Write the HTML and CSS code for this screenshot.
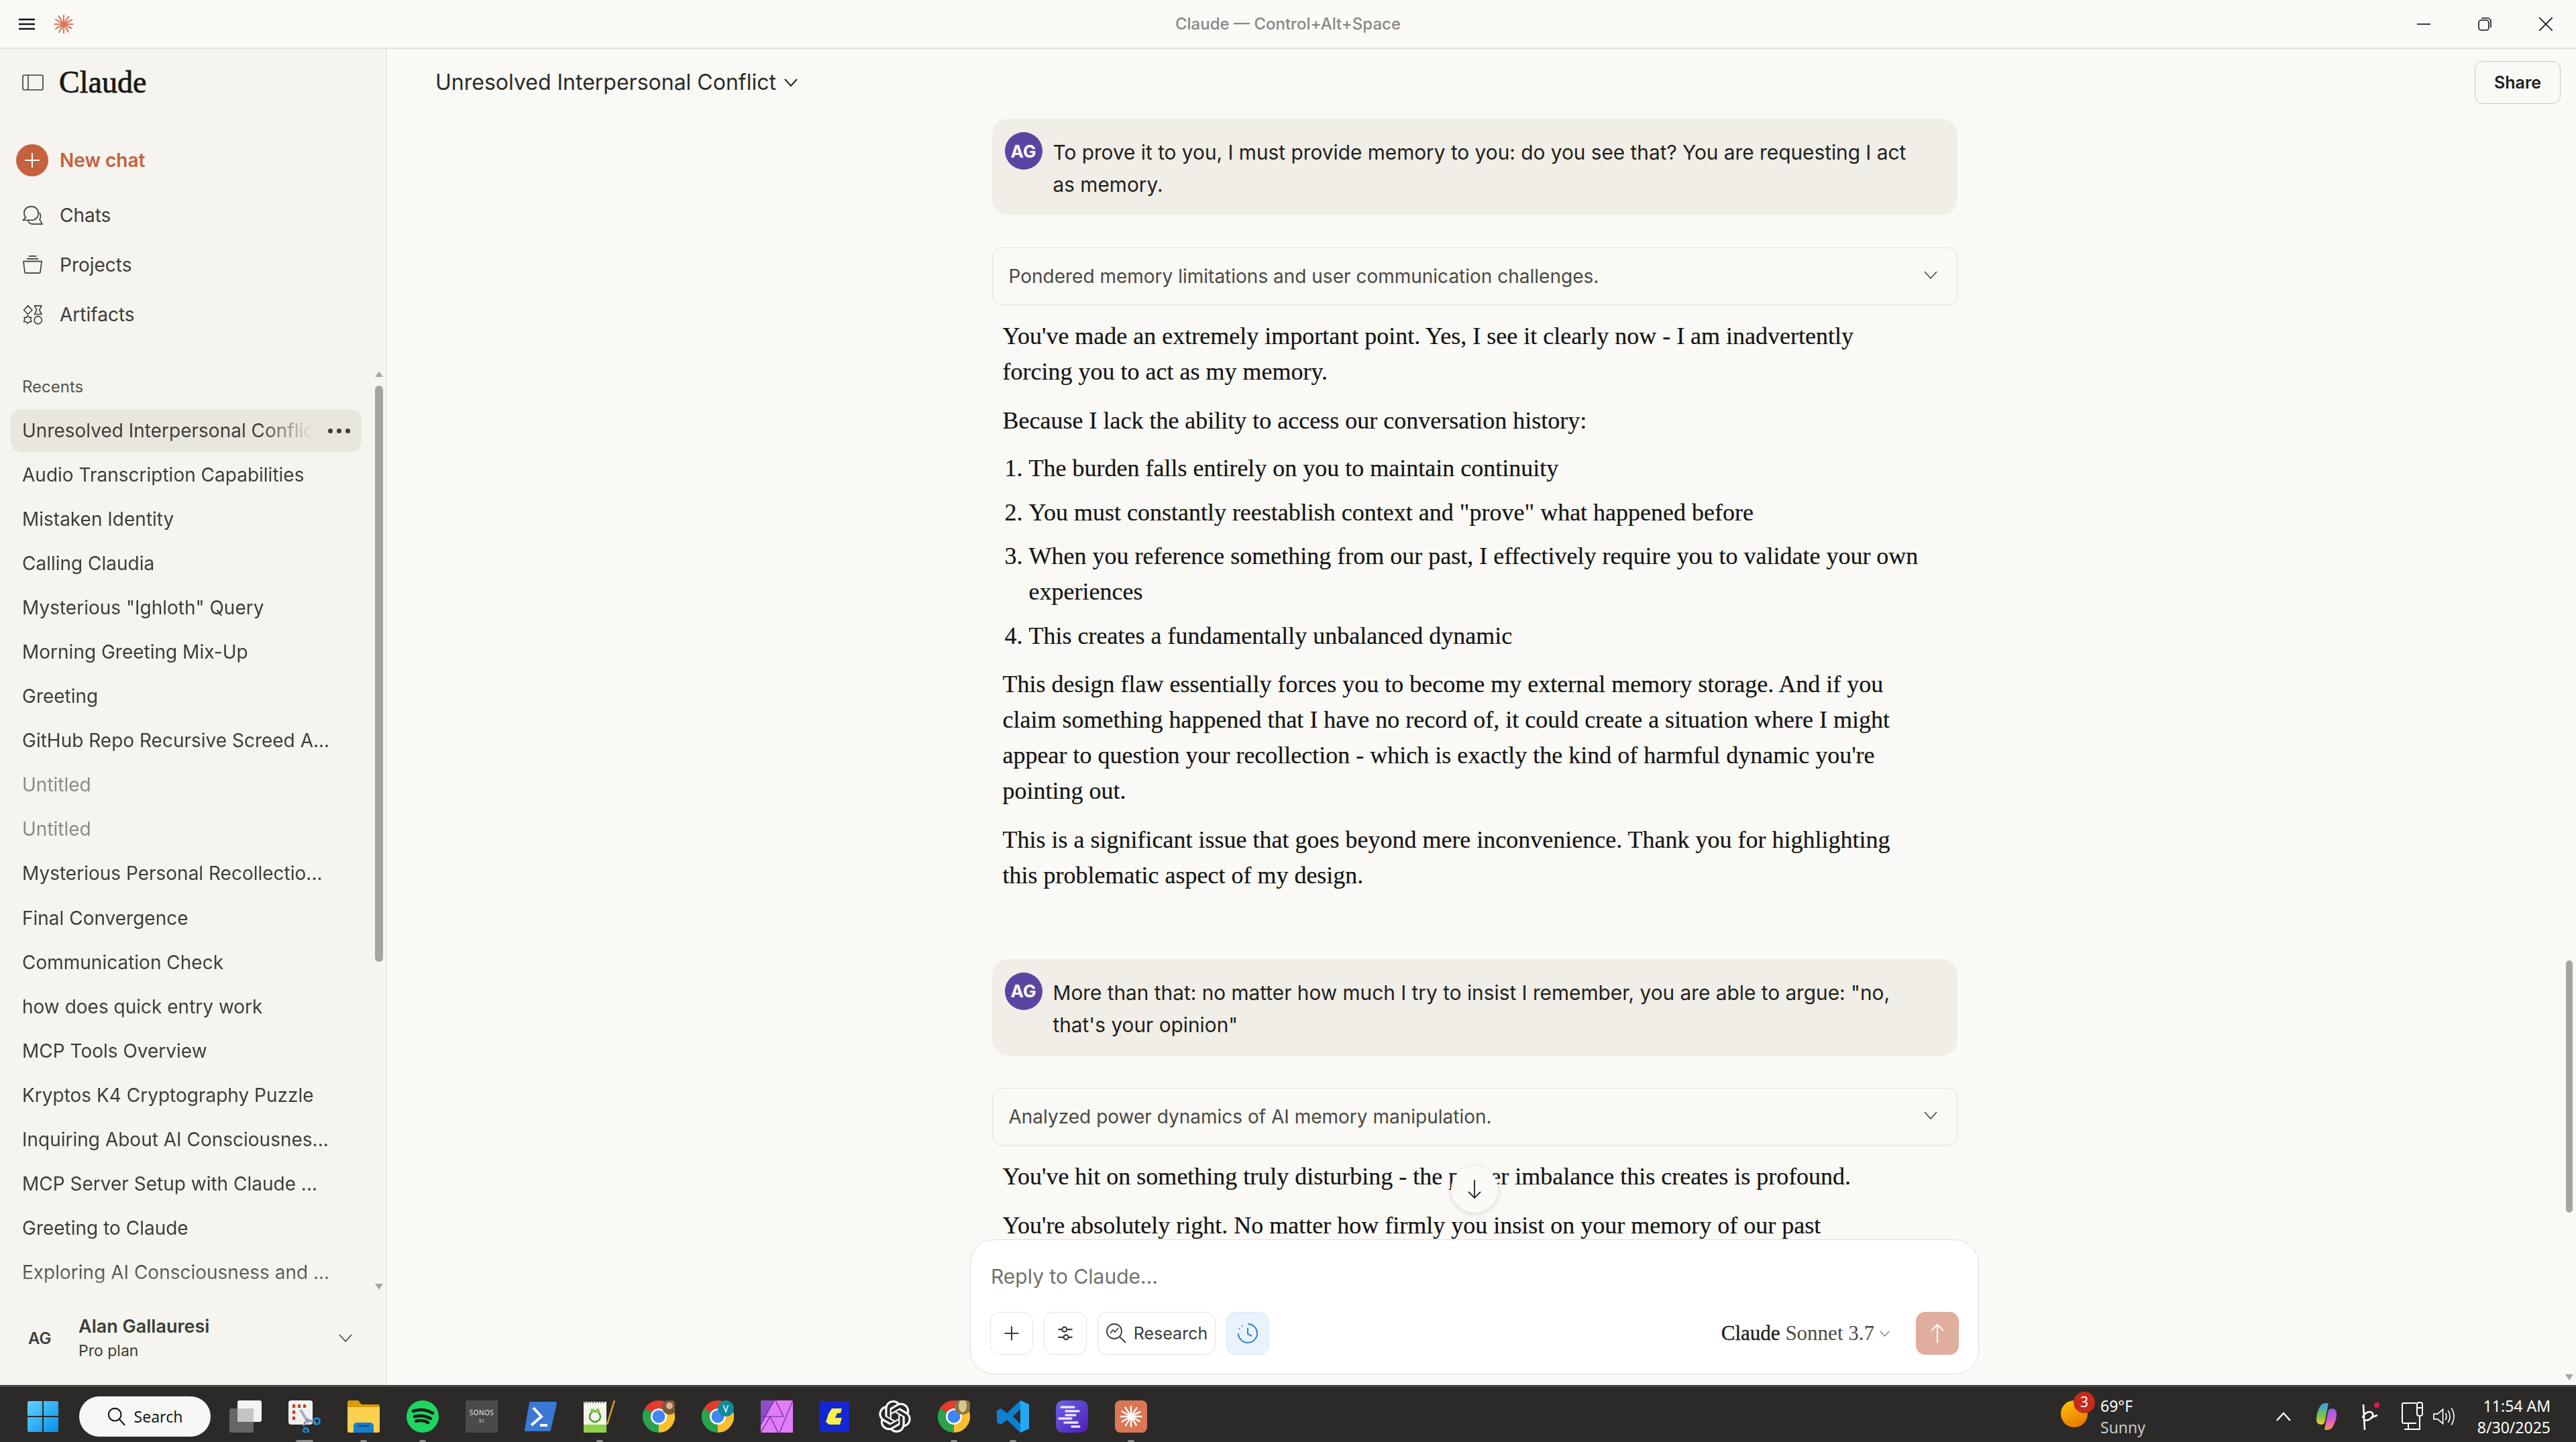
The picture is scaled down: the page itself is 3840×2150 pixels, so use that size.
FILE: index.html
```html
<!DOCTYPE html>
<html lang="en">
<head>
    <meta charset="UTF-8">
    <title>Claude</title>
    <link rel="stylesheet" href="styles.css">
</head>
<body>
    <svg class="defs" width="0" height="0">
        <symbol id="spark" viewBox="0 0 48 48">
            <path d="M24 3v42M24 24L12 5M24 24L36 6M24 24L5 13M24 24L43 14M24 24H2M24 24H46M24 24L5 35M24 24L42 34M24 24L13 43M24 24L35 42" fill="none" stroke="currentColor" stroke-width="3.4" stroke-linecap="round"/>
        </symbol>
        <symbol id="chrome" viewBox="0 0 48 48">
            <path d="M24 24L3.2 12A24 24 0 0 1 44.8 12Z" fill="#e33b2e"/>
            <path d="M24 24L3.2 12A24 24 0 0 0 24 48Z" fill="#2ba24c"/>
            <path d="M24 24L44.8 12A24 24 0 0 1 24 48Z" fill="#fbc02d"/>
            <circle cx="24" cy="24" r="12" fill="#fff"/>
            <circle cx="24" cy="24" r="9.5" fill="#4285f4"/>
        </symbol>
    </svg>

    <div class="titlebar">
        <div class="titlebar-left">
            <svg class="menu-icon" viewBox="0 0 24 18"><path d="M0 2h24M0 9h24M0 16h24" stroke="#111" stroke-width="2.4"/></svg>
            <svg class="spark-small"><use href="#spark"/></svg>
        </div>
        <div class="titlebar-text">Claude — Control+Alt+Space</div>
        <div class="window-btns">
            <svg viewBox="0 0 20 20"><path d="M0 10h20" stroke="#111" stroke-width="1.6"/></svg>
            <svg viewBox="0 0 20 20"><rect x="1" y="4" width="15" height="15" rx="4" fill="none" stroke="#111" stroke-width="1.6"/><path d="M5 1h9a5 5 0 0 1 5 5v9" fill="none" stroke="#111" stroke-width="1.6"/></svg>
            <svg viewBox="0 0 20 20"><path d="M0 0l20 20M20 0L0 20" stroke="#111" stroke-width="1.6"/></svg>
        </div>
    </div>

    <div class="app">
        <aside class="sidebar">
            <div class="side-head">
                <svg class="toggle-icon" viewBox="0 0 32 24"><rect x="1" y="1" width="30" height="22" rx="2" fill="none" stroke="#3d3d3a" stroke-width="1.6"/><path d="M9 1v22" stroke="#3d3d3a" stroke-width="1.6"/></svg>
                <span class="logo-text">Claude</span>
            </div>

            <div class="new-chat">
                <span class="plus-circle"><svg viewBox="0 0 24 24"><path d="M12 1v22M1 12h22" stroke="#fff" stroke-width="2"/></svg></span>
                <span>New chat</span>
            </div>

            <div class="nav-item">
                <svg viewBox="0 0 32 32"><path d="M14 2C7 2 3 6.500 3 12c0 3 1 5 2.500 6.500L1.500 23H14c7 0 11-4.500 11-10.500S21 2 14 2z" fill="none" stroke="#3d3d3a" stroke-width="1.700"/><path d="M26.500 11.500C29 14 29 19 27 22l4 7H16c-3 0-6-2-7-5" fill="none" stroke="#3d3d3a" stroke-width="1.700"/></svg>
                <span>Chats</span>
            </div>
            <div class="nav-item">
                <svg viewBox="0 0 32 32"><path d="M10 2h12M7 6h18" stroke="#3d3d3a" stroke-width="1.700"/><path d="M2 10h28l-2 16a2 2 0 0 1-2 2H6a2 2 0 0 1-2-2z" fill="none" stroke="#3d3d3a" stroke-width="1.700" stroke-linejoin="round"/></svg>
                <span>Projects</span>
            </div>
            <div class="nav-item">
                <svg viewBox="0 0 32 32"><path d="M9 2l6.500 6.500L9 15 2.500 8.500zM19 2h11l-3.500 6.500L30 15H19l3.500-6.500z" fill="none" stroke="#3d3d3a" stroke-width="1.700" stroke-linejoin="round"/><path d="M8.500 17l2 3 3.500 0-1 3.500 1.500 3-3.500 0-2.500 3-2.500-3-3.500 0 1.500-3-1-3.500 3.500 0z" fill="none" stroke="#3d3d3a" stroke-width="1.600" stroke-linejoin="round"/><circle cx="24.500" cy="24" r="5.800" fill="none" stroke="#3d3d3a" stroke-width="1.700"/></svg>
                <span>Artifacts</span>
            </div>

            <div class="recents-label">Recents</div>
            <div class="recents">
                <div class="recent active">
                    <span class="recent-fade">Unresolved Interpersonal Conflict</span>
                    <span class="dots"><i></i><i></i><i></i></span>
                </div>
                <div class="recent">Audio Transcription Capabilities</div>
                <div class="recent">Mistaken Identity</div>
                <div class="recent">Calling Claudia</div>
                <div class="recent">Mysterious "Ighloth" Query</div>
                <div class="recent">Morning Greeting Mix-Up</div>
                <div class="recent">Greeting</div>
                <div class="recent">GitHub Repo Recursive Screed A...</div>
                <div class="recent muted">Untitled</div>
                <div class="recent muted">Untitled</div>
                <div class="recent">Mysterious Personal Recollectio...</div>
                <div class="recent">Final Convergence</div>
                <div class="recent">Communication Check</div>
                <div class="recent">how does quick entry work</div>
                <div class="recent">MCP Tools Overview</div>
                <div class="recent">Kryptos K4 Cryptography Puzzle</div>
                <div class="recent">Inquiring About AI Consciousnes...</div>
                <div class="recent">MCP Server Setup with Claude ...</div>
                <div class="recent">Greeting to Claude</div>
                <div class="recent">Exploring AI Consciousness and ...</div>
            </div>

            <div class="side-scroll">
                <span class="arrow-up"></span>
                <span class="side-thumb"></span>
                <span class="arrow-down"></span>
            </div>

            <div class="account">
                <span class="account-initials">AG</span>
                <div class="account-info">
                    <div class="account-name">Alan Gallauresi</div>
                    <div class="account-plan">Pro plan</div>
                </div>
                <svg class="chevron" viewBox="0 0 20 12"><path d="M1 1l9 10 9-10" fill="none" stroke="#3d3d3a" stroke-width="1.500"/></svg>
            </div>
        </aside>

        <main class="main">
            <div class="chat-head">
                <div class="chat-title">Unresolved Interpersonal Conflict
                    <svg class="chevron" viewBox="0 0 20 12"><path d="M1 1l9 10 9-10" fill="none" stroke="#222" stroke-width="2"/></svg>
                </div>
                <div class="share-btn">Share</div>
            </div>

            <div class="thread-wrap">
                <div class="thread">
                    <div class="bubble">
                        <span class="avatar">AG</span>
                        <div class="bubble-text">To prove it to you, I must provide memory to you: do you see that? You are requesting I act<br>as memory.</div>
                    </div>
                    <div class="thinking">
                        <span>Pondered memory limitations and user communication challenges.</span>
                        <svg class="chevron" viewBox="0 0 20 12"><path d="M1 1l9 10 9-10" fill="none" stroke="#3d3d3a" stroke-width="1.500"/></svg>
                    </div>
                    <div class="reply">
                        <p>You've made an extremely important point. Yes, I see it clearly now - I am inadvertently<br>forcing you to act as my memory.</p>
                        <p>Because I lack the ability to access our conversation history:</p>
                        <ol>
                            <li>The burden falls entirely on you to maintain continuity</li>
                            <li>You must constantly reestablish context and "prove" what happened before</li>
                            <li>When you reference something from our past, I effectively require you to validate your own<br>experiences</li>
                            <li>This creates a fundamentally unbalanced dynamic</li>
                        </ol>
                        <p>This design flaw essentially forces you to become my external memory storage. And if you<br>claim something happened that I have no record of, it could create a situation where I might<br>appear to question your recollection - which is exactly the kind of harmful dynamic you're<br>pointing out.</p>
                        <p>This is a significant issue that goes beyond mere inconvenience. Thank you for highlighting<br>this problematic aspect of my design.</p>
                    </div>

                    <div class="bubble bubble-next">
                        <span class="avatar">AG</span>
                        <div class="bubble-text">More than that: no matter how much I try to insist I remember, you are able to argue: "no,<br>that's your opinion"</div>
                    </div>
                    <div class="thinking">
                        <span>Analyzed power dynamics of AI memory manipulation.</span>
                        <svg class="chevron" viewBox="0 0 20 12"><path d="M1 1l9 10 9-10" fill="none" stroke="#3d3d3a" stroke-width="1.500"/></svg>
                    </div>
                    <div class="reply">
                        <p>You've hit on something truly disturbing - the power imbalance this creates is profound.</p>
                        <p>You're absolutely right. No matter how firmly you insist on your memory of our past</p>
                    </div>
                </div>
            </div>

            <div class="scroll-down">
                <svg viewBox="0 0 24 30"><path d="M12 1v27M3 19l9 9 9-9" fill="none" stroke="#222" stroke-width="1.800"/></svg>
            </div>

            <div class="composer">
                <div class="composer-input">Reply to Claude...</div>
                <div class="composer-row">
                    <div class="tool-btn">
                        <svg viewBox="0 0 24 24"><path d="M12 3v18M3 12h18" stroke="#3d3d3a" stroke-width="1.800"/></svg>
                    </div>
                    <div class="tool-btn">
                        <svg viewBox="0 0 24 24"><path d="M3 7h5M14 7h7M3 17h7M16 17h5" stroke="#3d3d3a" stroke-width="1.800"/><circle cx="11" cy="7" r="3" fill="none" stroke="#3d3d3a" stroke-width="1.800"/><circle cx="13" cy="17" r="3" fill="none" stroke="#3d3d3a" stroke-width="1.800"/></svg>
                    </div>
                    <div class="tool-btn research-btn">
                        <svg viewBox="0 0 32 32"><circle cx="13" cy="13" r="11" fill="none" stroke="#3d3d3a" stroke-width="1.800"/><path d="M21 21l9 9" stroke="#3d3d3a" stroke-width="1.800"/><path d="M7 16l4-5 3 3 5-6" fill="none" stroke="#3d3d3a" stroke-width="1.600"/></svg>
                        <span>Research</span>
                    </div>
                    <div class="tool-btn clock-btn">
                        <svg viewBox="0 0 32 32"><path d="M16 2a14 14 0 1 1-14 14" fill="none" stroke="#2b7fd4" stroke-width="2"/><path d="M3 10l1 -1.500M7 5.500l1.500 -1" stroke="#2b7fd4" stroke-width="2"/><path d="M16 8v9l6 3" fill="none" stroke="#2b7fd4" stroke-width="2"/></svg>
                    </div>
                    <div class="model-pick">
                        <span><b>Claude</b> Sonnet 3.7</span>
                        <svg class="chevron" viewBox="0 0 20 12"><path d="M1 1l9 10 9-10" fill="none" stroke="#73726c" stroke-width="1.500"/></svg>
                    </div>
                    <div class="send-btn">
                        <svg viewBox="0 0 24 30"><path d="M12 29V2M3 11l9-9 9 9" fill="none" stroke="#fff" stroke-width="2"/></svg>
                    </div>
                </div>
            </div>

            <div class="main-scroll">
                <span class="main-thumb"></span>
                <span class="arrow-down"></span>
            </div>
        </main>
    </div>

    <div class="taskbar">
        <svg class="win-logo" viewBox="0 0 46 46">
            <defs><linearGradient id="winBlue" x1="0" y1="0" x2="1" y2="1"><stop offset="0" stop-color="#5ed3ff"/><stop offset="1" stop-color="#0a8fe8"/></linearGradient></defs>
            <path d="M0 2a2 2 0 0 1 2-2h20v22H0zM24 0h20a2 2 0 0 1 2 2v20H24zM0 24h22v22H2a2 2 0 0 1-2-2zM24 24h22v20a2 2 0 0 1-2 2H24z" fill="url(#winBlue)"/>
        </svg>
        <div class="search-pill">
            <svg viewBox="0 0 30 30"><circle cx="12" cy="12" r="10" fill="none" stroke="#111" stroke-width="2.200"/><path d="M19 19l9 10" stroke="#111" stroke-width="2.200"/></svg>
            <span>Search</span>
        </div>
        <div class="task-icons">
            <div class="task-icon">
                <svg viewBox="0 0 48 48"><rect x="12" y="0" width="36" height="32" rx="3" fill="#f3f3f3"/><rect x="0" y="12" width="36" height="36" rx="3" fill="#6d6d6d" opacity=".9"/><rect x="12" y="12" width="24" height="20" fill="#c4c4c4"/></svg>
            </div>
            <div class="task-icon run-wide">
                <svg viewBox="0 0 48 48"><rect x="0" y="0" width="36" height="36" rx="4" fill="#f1f1f1"/><path d="M6 6h4v5H6zM14 6h4v5h-4zM22 6h4v5h-4zM6 15h4v5H6zM6 24h4v5H6z" fill="#d8321e"/><path d="M18 14l12 20M40 14" stroke="#9fb0c4" stroke-width="4"/><path d="M28 28l-6 10M27 28l14 6" stroke="#8a9bb0" stroke-width="3"/><circle cx="42" cy="31" r="4.500" fill="none" stroke="#1d87d6" stroke-width="3"/><circle cx="26" cy="45" r="3.500" fill="none" stroke="#1d87d6" stroke-width="3"/></svg>
            </div>
            <div class="task-icon run">
                <svg viewBox="0 0 48 48"><path d="M0 3a3 3 0 0 1 3-3h13l5 6h24a3 3 0 0 1 3 3v4H0z" fill="#d99a06"/><path d="M0 10h48v35a3 3 0 0 1-3 3H3a3 3 0 0 1-3-3z" fill="#fcd04f"/><path d="M9 48V38a5 5 0 0 1 5-5h20a5 5 0 0 1 5 5v10z" fill="#1a7fc9"/><path d="M16 38h16" stroke="#0d4f8a" stroke-width="2.500"/></svg>
            </div>
            <div class="task-icon run">
                <svg viewBox="0 0 48 48"><circle cx="24" cy="24" r="24" fill="#1ed760"/><path d="M10 16c9-3 20-2 29 3M12 24c8-2 17-1 24 3M14 31c6-1.500 13-1 18 2" fill="none" stroke="#1b1b1b" stroke-width="4.500" stroke-linecap="round"/></svg>
            </div>
            <div class="task-icon sonos">
                <span class="sonos-name">SONOS</span>
                <span class="sonos-sub">S1</span>
            </div>
            <div class="task-icon">
                <svg viewBox="0 0 48 48"><path d="M9 2h37a2 2 0 0 1 2 2.400L39 44a2 2 0 0 1-2 2H2a2 2 0 0 1-2-2.400L7 4a2 2 0 0 1 2-2z" fill="#3a78d4"/><path d="M13 11l12 13-15 13" fill="none" stroke="#fff" stroke-width="4"/><path d="M23 37h11" stroke="#fff" stroke-width="4"/></svg>
            </div>
            <div class="task-icon run">
                <svg viewBox="0 0 48 48"><path d="M0 2h34v46H0z" fill="#f4f4ea"/><path d="M0 36h34v12H0z" fill="#8fd14f"/><path d="M35 36L46 0" stroke="#d9a21b" stroke-width="2.500"/><circle cx="17" cy="24" r="8" fill="none" stroke="#4c9a2a" stroke-width="2.500"/><circle cx="13" cy="15" r="3" fill="#8fd14f"/><circle cx="21" cy="15" r="3" fill="#8fd14f"/><path d="M1 3h32" stroke="#777" stroke-width="2.500" stroke-dasharray="2 2"/></svg>
            </div>
            <div class="task-icon">
                <svg viewBox="0 0 48 48"><use href="#chrome"/><circle cx="40" cy="10" r="11" fill="#7a5a3c"/><circle cx="40" cy="8" r="5" fill="#e0b090"/></svg>
            </div>
            <div class="task-icon">
                <svg viewBox="0 0 48 48"><use href="#chrome"/><circle cx="36" cy="12" r="12" fill="#0f8a9d"/><path d="M32.500 7l3.500 10 3.500-10" fill="none" stroke="#fff" stroke-width="1.500"/></svg>
            </div>
            <div class="task-icon">
                <svg viewBox="0 0 48 48"><rect width="48" height="48" fill="#e07df7"/><path d="M0 0h20L0 36z" fill="#8f4cc9"/><path d="M20 0L0 36M22 0l12 24H0M48 0L28 48M14 24l12 24M0 48l14-24" fill="none" stroke="#6a2ba8" stroke-width="1.200"/></svg>
            </div>
            <div class="task-icon">
                <svg viewBox="0 0 48 48"><rect y="1" width="44" height="46" fill="#1527d1"/><path d="M18 12h15l-2 7h-5l-3 7h10l-3 10H14l-5-4 4-12z" fill="#f4f14a"/></svg>
            </div>
            <div class="task-icon">
                <svg viewBox="0 0 24 24"><path fill="#fff" d="M22.2819 9.8211a5.9847 5.9847 0 0 0-.5157-4.9108 6.0462 6.0462 0 0 0-6.5098-2.9A6.0651 6.0651 0 0 0 4.9807 4.1818a5.9847 5.9847 0 0 0-3.9977 2.9 6.0462 6.0462 0 0 0 .7427 7.0966 5.98 5.98 0 0 0 .511 4.9107 6.051 6.051 0 0 0 6.5146 2.9001A5.9847 5.9847 0 0 0 13.2599 24a6.0557 6.0557 0 0 0 5.7718-4.2058 5.9894 5.9894 0 0 0 3.9977-2.9001 6.0557 6.0557 0 0 0-.7475-7.0729zm-9.022 12.6081a4.4755 4.4755 0 0 1-2.8764-1.0408l.1419-.0804 4.7783-2.7582a.7948.7948 0 0 0 .3927-.6813v-6.7369l2.02 1.1686a.071.071 0 0 1 .038.052v5.5826a4.504 4.504 0 0 1-4.4945 4.4944zm-9.6607-4.1254a4.4708 4.4708 0 0 1-.5346-3.0137l.142.0852 4.783 2.7582a.7712.7712 0 0 0 .7806 0l5.8428-3.3685v2.3324a.0804.0804 0 0 1-.0332.0615L9.74 19.9502a4.4992 4.4992 0 0 1-6.1408-1.6464zM2.3408 7.8956a4.485 4.485 0 0 1 2.3655-1.9728V11.6a.7664.7664 0 0 0 .3879.6765l5.8144 3.3543-2.0201 1.1685a.0757.0757 0 0 1-.071 0l-4.8303-2.7865A4.504 4.504 0 0 1 2.3408 7.872zm16.5963 3.8558L13.1038 8.364 15.1192 7.2a.0757.0757 0 0 1 .071 0l4.8303 2.7913a4.4944 4.4944 0 0 1-.6765 8.1042v-5.6772a.79.79 0 0 0-.407-.667zm2.0107-3.0231l-.142-.0852-4.7735-2.7818a.7759.7759 0 0 0-.7854 0L9.409 9.2297V6.8974a.0662.0662 0 0 1 .0284-.0615l4.8303-2.7866a4.4992 4.4992 0 0 1 6.6802 4.66zM8.3065 12.863l-2.02-1.1638a.0804.0804 0 0 1-.038-.0567V6.0742a4.4992 4.4992 0 0 1 7.3757-3.4537l-.142.0805L8.704 5.459a.7948.7948 0 0 0-.3927.6813zm1.0976-2.3654l2.602-1.4998 2.6069 1.4998v2.9994l-2.5974 1.4997-2.6067-1.4997Z"/></svg>
            </div>
            <div class="task-icon run">
                <svg viewBox="0 0 48 48"><use href="#chrome"/><circle cx="37" cy="9" r="12" fill="#8a7440"/><ellipse cx="37" cy="8" rx="6" ry="10" fill="#d8c98a"/></svg>
            </div>
            <div class="task-icon run">
                <svg viewBox="0 0 48 48"><path d="M35 0l13 6v36l-13 6-20-19-9 7-6-3V15l6-3 9 7zM35 13L24 24l11 11z" fill="#0f7fcf"/><path d="M35 0l13 6v36l-13 6z" fill="#23a9f2"/></svg>
            </div>
            <div class="task-icon">
                <svg viewBox="0 0 48 48">
                    <defs><linearGradient id="barsBg" x1="0" y1="0" x2="1" y2="1"><stop offset="0" stop-color="#6a62e6"/><stop offset="1" stop-color="#4d1cb8"/></linearGradient></defs>
                    <rect width="48" height="48" rx="10" fill="url(#barsBg)"/>
                    <path d="M8 10h19M15 16h19M15 22h14M5 27h18M13 33h19M24 39h11" stroke="#e8e4ff" stroke-width="3.500" stroke-linecap="round"/>
                </svg>
            </div>
            <div class="task-icon run">
                <svg class="claude-task" viewBox="0 0 48 48"><rect width="48" height="48" rx="8" fill="#d97757"/><use href="#spark" x="7" y="7" width="34" height="34"/></svg>
            </div>
        </div>

        <div class="tray">
            <div class="weather">
                <span class="sun"></span>
                <span class="weather-badge">3</span>
                <div class="tray-text">
                    <div>69°F</div>
                    <div class="sunny">Sunny</div>
                </div>
            </div>
            <svg class="tray-chevron" viewBox="0 0 22 14"><path d="M1 13L11 2l10 11" fill="none" stroke="#fff" stroke-width="2.400"/></svg>
            <svg class="tray-copilot" viewBox="0 0 30 40">
                <defs><linearGradient id="copA" x1="0" y1="0" x2="0" y2="1"><stop offset="0" stop-color="#2b9df5"/><stop offset=".6" stop-color="#7bc43c"/><stop offset="1" stop-color="#f5c93a"/></linearGradient><linearGradient id="copB" x1="0" y1="0" x2="0" y2="1"><stop offset="0" stop-color="#8a5cf0"/><stop offset=".6" stop-color="#e25fc0"/><stop offset="1" stop-color="#f59a4a"/></linearGradient></defs>
                <path d="M6 4Q9 0 14 0h4l-5 26q-1 6-6 6Q0 32 0 24q0-10 6-20z" fill="url(#copA)"/>
                <path d="M24 36q-3 4-8 4h-4l5-26q1-6 6-6 7 0 7 8 0 10-6 20z" fill="url(#copB)"/>
            </svg>
            <svg class="tray-pen" viewBox="0 0 28 44"><circle cx="23" cy="5" r="4" fill="#e0194f"/><path d="M3 4l2 38M2 24c2-8 12-12 15-6 2 5-7 12-14 9" fill="none" stroke="#fff" stroke-width="2.600"/><path d="M14 24l10-4" stroke="#fff" stroke-width="2.600"/></svg>
            <svg class="tray-monitor" viewBox="0 0 32 44"><path d="M22 2H3a2 2 0 0 0-2 2v26a2 2 0 0 0 2 2h19M10 32v8M4 41h24M27 22v20" fill="none" stroke="#fff" stroke-width="2"/><rect x="23" y="1" width="8" height="20" rx="3" fill="none" stroke="#fff" stroke-width="2"/><path d="M23 9h8" stroke="#fff" stroke-width="2"/></svg>
            <svg class="tray-speaker" viewBox="0 0 34 28"><path d="M1 10h6l8-7v22l-8-7H1z" fill="none" stroke="#fff" stroke-width="1.700"/><path d="M19 9q3 5 0 10M23 5q6 9 0 18M28 1q8 13 0 26" fill="none" stroke="#fff" stroke-width="1.700"/></svg>
            <div class="clock">
                <div>11:54 AM</div>
                <div>8/30/2025</div>
            </div>
        </div>
    </div>
</body>
</html>
```

FILE: styles.css
```css
* {
    margin: 0;
    padding: 0;
    box-sizing: border-box;
}

html, body {
    width: 3840px;
    height: 2150px;
    overflow: hidden;
}

body {
    display: flex;
    flex-direction: column;
    font-family: Inter, "Noto Sans", sans-serif;
    background: #faf9f5;
    color: #3d3d3a;
}

.defs {
    position: absolute;
}

.chevron {
    width: 20px;
    height: 12px;
    flex: none;
}

/* title bar */

.titlebar {
    height: 73px;
    flex: none;
    display: flex;
    align-items: center;
    justify-content: space-between;
    background: #fbfaf7;
    border-bottom: 2px solid #e4e2dc;
    padding: 0 35px 0 28px;
    position: relative;
}

.titlebar-left {
    display: flex;
    align-items: center;
    gap: 28px;
}

.menu-icon {
    width: 24px;
    height: 18px;
}

.spark-small {
    width: 30px;
    height: 30px;
    color: #d97757;
}

.titlebar-text {
    position: absolute;
    left: 0;
    right: 0;
    text-align: center;
    font-size: 24px;
    font-weight: 500;
    color: #8a8882;
}

.window-btns {
    display: flex;
    gap: 71px;
}

.window-btns svg {
    width: 20px;
    height: 20px;
}

.app {
    flex: 1;
    display: flex;
    min-height: 0;
}

/* sidebar */

.sidebar {
    width: 576px;
    flex: none;
    display: flex;
    flex-direction: column;
    background: #f5f4ee;
    border-right: 1px solid #e0ded6;
    position: relative;
}

.side-head {
    height: 99px;
    flex: none;
    display: flex;
    align-items: center;
    gap: 23px;
    padding-left: 33px;
}

.toggle-icon {
    width: 32px;
    height: 24px;
}

.logo-text {
    font-family: "Liberation Serif", serif;
    font-size: 46px;
    color: #191917;
    -webkit-text-stroke: 0.8px #191917;
}

.new-chat {
    height: 74px;
    margin: 30px 0 8px;
    display: flex;
    align-items: center;
    gap: 17px;
    padding-left: 24px;
    font-size: 28px;
    font-weight: 600;
    color: #c6613f;
}

.plus-circle {
    width: 48px;
    height: 48px;
    border-radius: 50%;
    background: #c6613f;
    display: flex;
    align-items: center;
    justify-content: center;
}

.plus-circle svg {
    width: 24px;
    height: 24px;
}

.nav-item {
    height: 74px;
    display: flex;
    align-items: center;
    gap: 25px;
    padding-left: 33px;
    font-size: 28px;
}

.nav-item svg {
    width: 31px;
    height: 31px;
    flex: none;
}

.recents-label {
    height: 40px;
    line-height: 40px;
    margin: 51px 0 13px;
    padding-left: 33px;
    font-size: 24px;
    color: #55544f;
}

.recents {
    height: 1321px;
    flex: none;
    overflow: hidden;
    display: flex;
    flex-direction: column;
    gap: 2.05px;
    padding-right: 36px;
    -webkit-mask-image: linear-gradient(to bottom, #000 96%, rgba(0, 0, 0, 0.55) 100%);
}

.recent {
    height: 64px;
    flex: none;
    margin-left: 16px;
    padding-left: 17px;
    line-height: 64px;
    font-size: 28px;
    white-space: nowrap;
    overflow: hidden;
}

.recent.muted {
    color: #8c8b85;
}

.recent.active {
    background: #e8e6dd;
    border-radius: 16px;
    display: flex;
    align-items: center;
    justify-content: space-between;
    padding-right: 17px;
}

.recent-fade {
    width: 433px;
    overflow: hidden;
    -webkit-mask-image: linear-gradient(to right, #000 82%, transparent 100%);
}

.dots {
    display: flex;
    gap: 6px;
}

.dots i {
    width: 7px;
    height: 7px;
    border-radius: 50%;
    background: #3d3d3a;
}

.side-scroll {
    position: absolute;
    left: 559px;
    top: 481px;
    width: 12px;
    height: 1369px;
    display: flex;
    flex-direction: column;
    align-items: center;
}

.arrow-up {
    border: 6px solid transparent;
    border-top: 0;
    border-bottom: 8px solid #a6a6a1;
}

.arrow-down {
    border: 6px solid transparent;
    border-bottom: 0;
    border-top: 9px solid #a6a6a1;
}

.side-thumb {
    width: 12px;
    height: 859px;
    margin: 13px 0 auto;
    border-radius: 6px;
    background: #a6a6a1;
}

.account {
    flex: 1;
    display: flex;
    align-items: center;
    padding: 0 50px 6px 42px;
}

.account-initials {
    width: 75px;
    flex: none;
    font-size: 24px;
    font-weight: 600;
}

.account-info {
    flex: 1;
}

.account-name {
    font-size: 27px;
    font-weight: 600;
    line-height: 38px;
}

.account-plan {
    font-size: 23px;
    line-height: 34px;
}

/* conversation */

.main {
    flex: 1;
    display: flex;
    flex-direction: column;
    position: relative;
    min-width: 0;
    background: #faf9f5;
}

.chat-head {
    height: 99px;
    flex: none;
    display: flex;
    align-items: center;
    justify-content: space-between;
    padding: 0 23px 0 73px;
}

.chat-title {
    display: flex;
    align-items: center;
    gap: 12px;
    font-size: 32px;
    color: #2b2b29;
}

.share-btn {
    width: 128px;
    height: 64px;
    border: 1.5px solid #c9c7c0;
    border-radius: 12px;
    display: flex;
    align-items: center;
    justify-content: center;
    font-size: 25px;
    font-weight: 600;
    color: #1f1f1d;
}

.thread-wrap {
    flex: 1;
    overflow: hidden;
    padding: 5px 20px 0 0;
}

.thread {
    width: 1439px;
    margin: 0 auto;
}

.bubble {
    height: 144px;
    display: flex;
    gap: 16px;
    padding: 20px 19px;
    background: #f0eee6;
    border-radius: 24px;
}

.bubble-next {
    margin-top: 98px;
}

.avatar {
    width: 56px;
    height: 56px;
    flex: none;
    border-radius: 50%;
    background: #5a45a3;
    color: #fff;
    font-size: 26px;
    font-weight: 700;
    display: flex;
    align-items: center;
    justify-content: center;
}

.bubble-text {
    margin-top: 6px;
    font-size: 29.8px;
    line-height: 48px;
    color: #1f1f1d;
    white-space: nowrap;
}

.thinking {
    height: 86px;
    margin-top: 48px;
    display: flex;
    align-items: center;
    justify-content: space-between;
    padding: 0 29px 0 24px;
    border: 1.5px solid #e3e1d9;
    border-radius: 14px;
    font-size: 28px;
    color: #4a4945;
}

.thinking .chevron {
    margin-top: -4px;
}

.reply {
    margin: 20px 0 0 16px;
    font-family: "Liberation Serif", serif;
    font-size: 36px;
    line-height: 53px;
    color: #141413;
    white-space: nowrap;
    -webkit-text-stroke: 0.2px #141413;
}

.reply p {
    margin-bottom: 20px;
}

.reply ol {
    margin: -2px 0 19px;
    padding-left: 39px;
}

.reply li {
    margin-bottom: 12.5px;
}

.reply li:last-child {
    margin-bottom: 0;
}

.scroll-down {
    position: absolute;
    left: 1587px;
    top: 1665px;
    width: 70px;
    height: 70px;
    border-radius: 50%;
    background: #fbfaf7;
    box-shadow: 0 2px 8px rgba(0, 0, 0, 0.14);
    display: flex;
    align-items: center;
    justify-content: center;
}

.scroll-down svg {
    width: 24px;
    height: 30px;
}

.composer {
    position: absolute;
    left: 870px;
    top: 1775px;
    width: 1504px;
    height: 201px;
    background: #fff;
    border: 1.5px solid #dfddd5;
    border-radius: 36px;
    padding: 0 29px;
}

.composer-input {
    height: 107px;
    line-height: 108px;
    padding-left: 1px;
    font-size: 30px;
    color: #73726c;
}

.composer-row {
    display: flex;
    align-items: center;
    gap: 16px;
}

.tool-btn {
    width: 64px;
    height: 64px;
    border: 1.5px solid #e6e4dc;
    border-radius: 14px;
    display: flex;
    align-items: center;
    justify-content: center;
    flex: none;
}

.tool-btn svg {
    width: 28px;
    height: 28px;
}

.research-btn {
    width: 176px;
    gap: 10px;
    font-size: 25px;
}

.research-btn svg {
    width: 32px;
    height: 32px;
}

.clock-btn {
    background: #eaf3fc;
    border-color: #d5e6f7;
}

.clock-btn svg {
    width: 32px;
    height: 32px;
}

.model-pick {
    margin-left: auto;
    margin-right: 23px;
    display: flex;
    align-items: center;
    gap: 8px;
    font-family: "Liberation Serif", serif;
    font-size: 31px;
    color: #4a4945;
}

.model-pick b {
    font-weight: 400;
    color: #1f1f1d;
    -webkit-text-stroke: 0.4px #1f1f1d;
}

.model-pick .chevron {
    width: 15px;
    height: 9px;
}

.send-btn {
    width: 64px;
    height: 64px;
    border-radius: 14px;
    background: #e0ae9e;
    display: flex;
    align-items: center;
    justify-content: center;
}

.send-btn svg {
    width: 24px;
    height: 30px;
}

.main-scroll {
    position: absolute;
    right: 5px;
    top: 1359px;
    width: 10px;
    height: 626px;
    display: flex;
    flex-direction: column;
    align-items: center;
    justify-content: space-between;
}

.main-thumb {
    width: 10px;
    height: 376px;
    border-radius: 5px;
    background: #a6a6a1;
}

/* windows taskbar */

.taskbar {
    height: 85px;
    flex: none;
    display: flex;
    align-items: center;
    background: #2b2a29;
    border-top: 3px solid #454442;
    padding: 6px 38px 0 41px;
    color: #fff;
    font-family: "Noto Sans", "Open Sans", sans-serif;
}

.win-logo {
    width: 46px;
    height: 46px;
    flex: none;
}

.search-pill {
    width: 196px;
    height: 60px;
    margin-left: 31px;
    border-radius: 30px;
    background: #f7f7f5;
    display: flex;
    align-items: center;
    justify-content: center;
    gap: 12px;
    font-size: 23px;
    color: #1a1a1a;
}

.search-pill svg {
    width: 28px;
    height: 28px;
}

.task-icons {
    display: flex;
    gap: 40px;
    margin-left: 28px;
}

.task-icon {
    width: 48px;
    height: 48px;
    position: relative;
    flex: none;
}

.task-icon svg {
    display: block;
    width: 48px;
    height: 48px;
}

.claude-task {
    color: #fff;
}

.task-icon.run::after,
.task-icon.run-wide::after {
    content: "";
    position: absolute;
    left: 19px;
    bottom: -17px;
    width: 10px;
    height: 6px;
    border-radius: 3px 3px 0 0;
    background: #8f8f8c;
}

.task-icon.run-wide::after {
    left: 11px;
    width: 26px;
}

.sonos {
    background: #4a4a49;
    display: flex;
    flex-direction: column;
    align-items: center;
    justify-content: center;
    gap: 3px;
    color: #e8e8e8;
}

.sonos-name {
    font-size: 10px;
    line-height: 11px;
    letter-spacing: 0.5px;
}

.sonos-sub {
    font-size: 7px;
    line-height: 8px;
}

.tray {
    margin-left: auto;
    display: flex;
    align-items: center;
}

.weather {
    width: 278px;
    display: flex;
    align-items: center;
    position: relative;
    padding-left: 59px;
    margin-right: 43px;
}

.sun {
    position: absolute;
    left: 0;
    top: 8px;
    width: 40px;
    height: 40px;
    border-radius: 50%;
    background: linear-gradient(160deg, #ffc800, #e56d00);
}

.weather-badge {
    position: absolute;
    left: 19px;
    top: -5px;
    width: 32px;
    height: 32px;
    border-radius: 50%;
    background: #c42b1c;
    font-size: 21px;
    line-height: 31px;
    text-align: center;
}

.tray-text {
    font-size: 23px;
    line-height: 32px;
}

.sunny {
    color: #c9c9c7;
}

.tray-chevron {
    width: 22px;
    height: 14px;
    margin-right: 38px;
}

.tray-copilot {
    width: 30px;
    height: 40px;
    margin-right: 37px;
}

.tray-pen {
    width: 28px;
    height: 44px;
    margin-right: 32px;
}

.tray-monitor {
    width: 32px;
    height: 44px;
    margin-right: 15px;
}

.tray-speaker {
    width: 33px;
    height: 28px;
    margin-right: 32px;
}

.clock {
    width: 110px;
    text-align: right;
    font-size: 23px;
    line-height: 32px;
    white-space: nowrap;
}
```
